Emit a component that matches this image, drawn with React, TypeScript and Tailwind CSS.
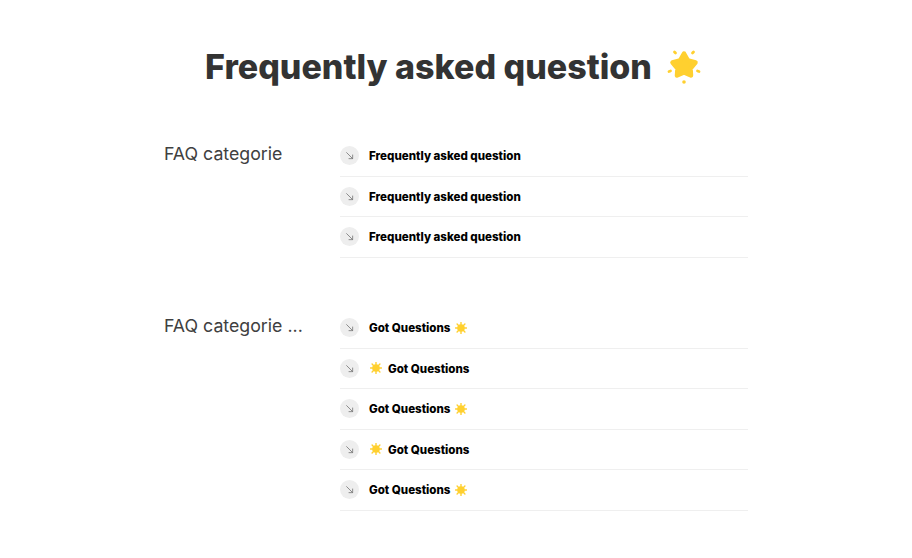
const font = { fontFamily: "Inter, sans-serif" };

const Star = () => (
  <svg viewBox="0 0 36 36" className="w-[36px] h-[36px]">
    <path
      d="M18 4.500L22 11.500L29.500 13.500L24.500 19.500L25 26.500L18 23.500L11 26.500L11.500 19.500L6.500 13.500L14 11.500Z"
      fill="#ffd02f"
      stroke="#ffd02f"
      strokeWidth="4.500"
      strokeLinejoin="round"
    />
    <path
      d="M8.500 3L9.500 4M27.500 3L26.500 4M3 22.500L4.500 22M33 22.500L31.500 22"
      stroke="#ffd02f"
      strokeWidth="2.800"
      strokeLinecap="round"
    />
    <circle cx="18" cy="33" r="1.800" fill="#ffd02f" />
  </svg>
);

const Sun = () => (
  <svg viewBox="0 0 12 12" className="w-[12px] h-[12px] mt-[-2px]">
    <circle cx="6" cy="6" r="3.800" fill="#ffd02f" />
    <path
      d="M6 .5v2M6 9.500v2M.5 6h2M9.500 6h2M2.100 2.100l1.400 1.400M8.500 8.500l1.400 1.400M2.100 9.900l1.400-1.400M8.500 3.500l1.400-1.400"
      stroke="#ffd02f"
      strokeWidth="1.400"
      strokeLinecap="round"
    />
  </svg>
);

const Row = ({ children }: { children: React.ReactNode }) => (
  <div className="flex items-center gap-[10px] h-[40.500px] border-b border-[#efefef]">
    <span className="flex items-center justify-center w-[19px] h-[19px] rounded-full bg-[#eeeeee] shrink-0">
      <svg viewBox="0 0 10 10" className="w-[9px] h-[9px]" fill="none" stroke="#666" strokeWidth="0.800">
        <path d="M1.500 1.500L8.500 8.500M8.500 4v4.500H4" />
      </svg>
    </span>
    <span className="flex items-center gap-[5px] pt-[2px] text-[11.550px] font-extrabold text-black">{children}</span>
  </div>
);

const SunRow = ({ left }: { left?: boolean }) => (
  <Row>
    {left && <span className="ml-[1px] mr-[1px]"><Sun /></span>}
    Got Questions
    {!left && <Sun />}
  </Row>
);

export default function App() {
  return (
    <div style={font} className="w-[912px] h-[558px] bg-white flex flex-col items-center overflow-hidden">
      <div className="flex items-center gap-[14px] mt-[46px] h-[42px] ml-[-5px]">
        <h1 className="text-[34px] font-extrabold text-[#333] leading-none">Frequently asked question</h1>
        <Star />
      </div>

      <div className="w-[584px] mt-[48px] flex">
        <div className="w-[176px] text-[17.750px] text-[#404040] pt-[5px]">FAQ categorie</div>
        <div className="w-[408px]">
          <Row>Frequently asked question</Row>
          <Row>Frequently asked question</Row>
          <Row>Frequently asked question</Row>
        </div>
      </div>

      <div className="w-[584px] mt-[50.500px] flex">
        <div className="w-[176px] text-[17.750px] text-[#404040] pt-[5px]">FAQ categorie ...</div>
        <div className="w-[408px]">
          <SunRow />
          <SunRow left />
          <SunRow />
          <SunRow left />
          <SunRow />
        </div>
      </div>
    </div>
  );
}
